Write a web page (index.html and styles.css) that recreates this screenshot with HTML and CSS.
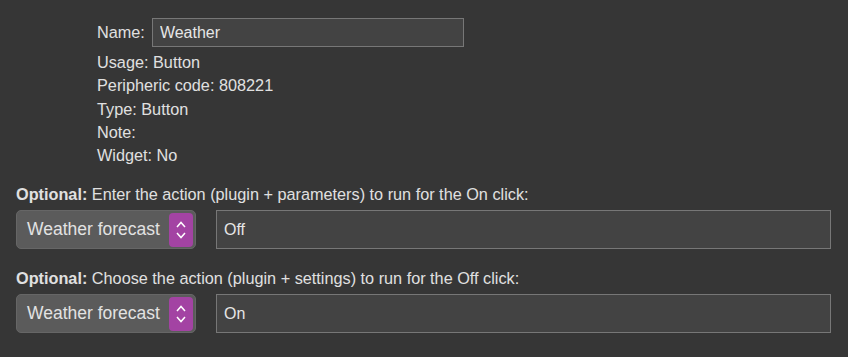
FILE: index.html
```html
<!DOCTYPE html>
<html lang="en">
<head>
<meta charset="UTF-8">
<title>Peripheric action</title>
<link rel="stylesheet" href="styles.css">
</head>
<body>

<div class="details">
  <div class="name-row">
    <label for="name">Name:</label>
    <input id="name" class="field name-field" type="text" value="Weather">
  </div>
  <div class="info">Usage: Button</div>
  <div class="info">Peripheric code: 808221</div>
  <div class="info">Type: Button</div>
  <div class="info">Note:</div>
  <div class="info">Widget: No</div>
</div>

<div class="actions">
  <div class="action">
    <div class="action-label"><strong>Optional:</strong> Enter the action (plugin + parameters) to run for the On click:</div>
    <div class="action-row">
      <div class="picker">
        <span class="picker-text">Weather forecast</span>
        <span class="picker-btn">
          <svg width="12" height="22" viewBox="0 0 12 22">
            <polyline points="2,8 6,3.5 10,8" fill="none" stroke="#fff" stroke-width="1.5"/>
            <polyline points="2,14 6,18.5 10,14" fill="none" stroke="#fff" stroke-width="1.5"/>
          </svg>
        </span>
      </div>
      <input class="field param-field" type="text" value="Off">
    </div>
  </div>

  <div class="action">
    <div class="action-label"><strong>Optional:</strong> Choose the action (plugin + settings) to run for the Off click:</div>
    <div class="action-row">
      <div class="picker">
        <span class="picker-text">Weather forecast</span>
        <span class="picker-btn">
          <svg width="12" height="22" viewBox="0 0 12 22">
            <polyline points="2,8 6,3.5 10,8" fill="none" stroke="#fff" stroke-width="1.5"/>
            <polyline points="2,14 6,18.5 10,14" fill="none" stroke="#fff" stroke-width="1.5"/>
          </svg>
        </span>
      </div>
      <input class="field param-field" type="text" value="On">
    </div>
  </div>
</div>

</body>
</html>
```

FILE: styles.css
```css
body { margin: 0; background: #363636; color: #e0e0e0; font-family: "Liberation Sans", Arial, sans-serif; font-size: 16.25px; }
.details { padding: 18px 0 0 97px; }
.name-row { display: flex; align-items: center; gap: 7px; }
.info { line-height: 23.3px; }
.name-row + .info { margin-top: 4px; }
.field { box-sizing: border-box; background: #434343; border: 1px solid #777; color: #e6e6e6; font-family: inherit; font-size: 16px; padding: 0 7px; outline: none; }
.name-field { width: 312px; height: 29px; }
.actions { padding: 16px 16px 0 16px; }
.action { margin-bottom: 18px; }
.action-label { line-height: 23px; margin-bottom: 4px; }
.action-label strong { font-weight: bold; }
.action-row { display: flex; align-items: center; gap: 20px; }
.picker { box-sizing: border-box; width: 180px; height: 39px; background: #5b5b5b; border: 1px solid #666; border-radius: 5px; display: flex; align-items: center; justify-content: space-between; padding: 0 2px 0 10px; }
.picker-text { font-size: 17.5px; color: #e2e2e2; }
.picker-btn { width: 24px; height: 34px; background: #a343a3; border-radius: 4px; display: flex; align-items: center; justify-content: center; }
.param-field { width: 615px; height: 39px; }
```
